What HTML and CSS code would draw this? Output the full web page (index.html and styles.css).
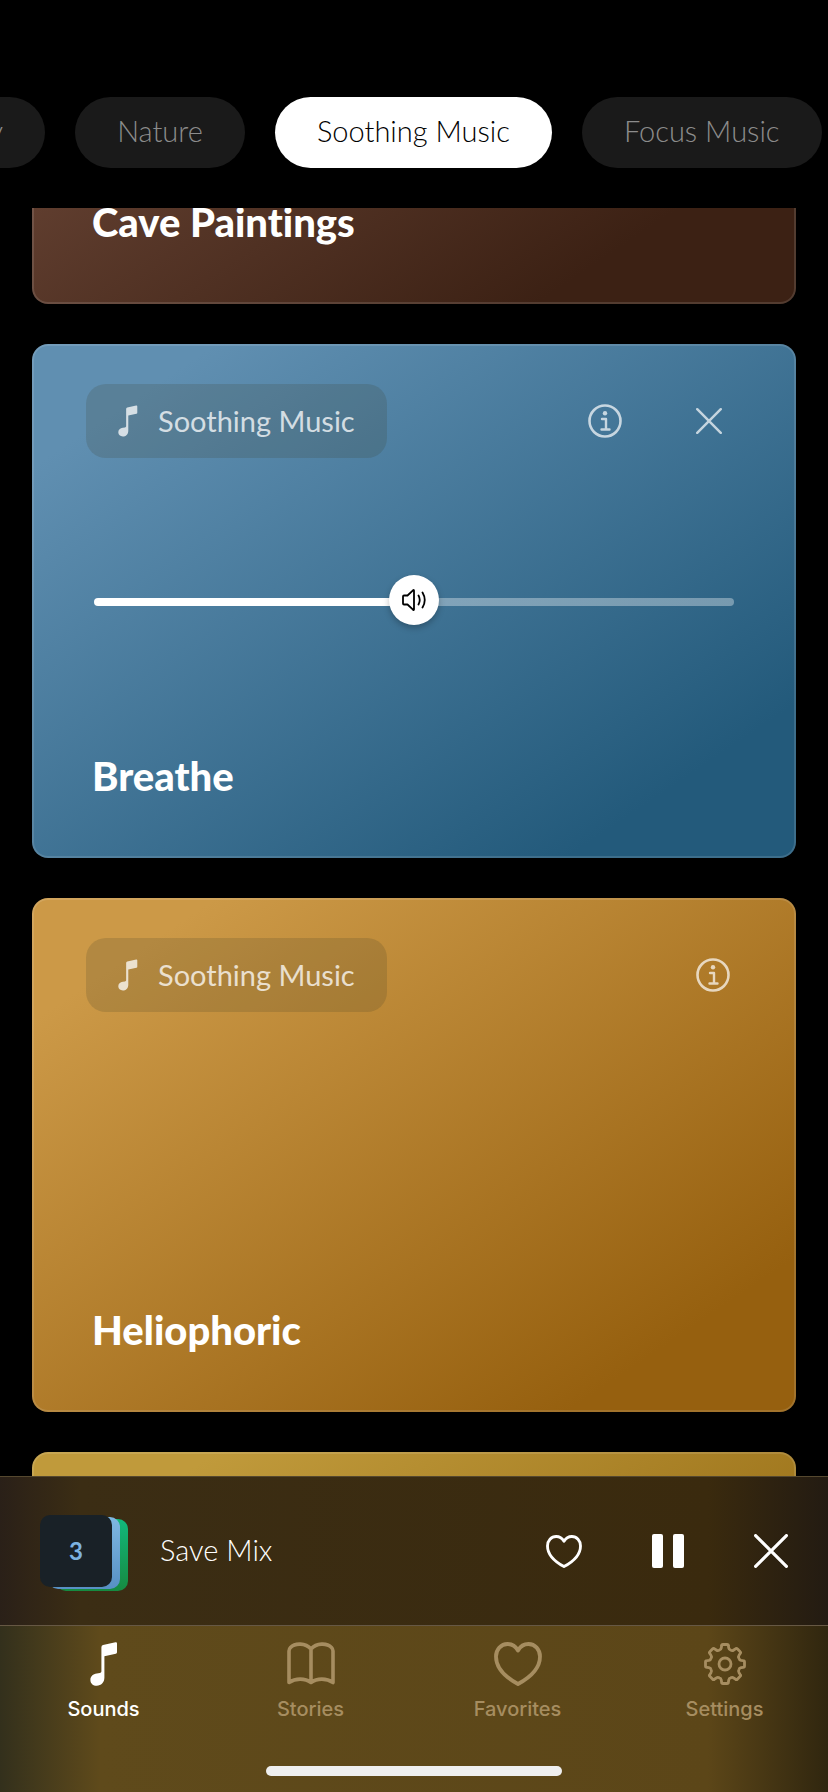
FILE: index.html
```
<!DOCTYPE html>
<html lang="en">
<head>
  <meta charset="UTF-8" />
  <meta name="viewport" content="width=device-width, initial-scale=1.0"/>
  <title>Sounds</title>
  <link rel="stylesheet" href="styles.css">
</head>
<body>

  <!-- shared icons -->
  <svg class="icon-defs" aria-hidden="true">
    <symbol id="icon-note" viewBox="0 0 28 44">
      <path d="M11.4 5.2 Q11.4 3.4 13 3 L25.500 .3 Q27 0 27 1.600 V10.300 Q27 11.400 25.800 11.700 L14.400 14.200 V35.500 C14.400 40.500 11 43.700 6.800 43.700 C3 43.700 .4 41.400 .4 37.900 C.4 34.300 3 32 6.800 31.500 L9.800 31 Q11.400 30.700 11.400 29.400 Z" fill="currentColor"/>
    </symbol>
    <symbol id="icon-info" viewBox="0 0 34 34">
      <circle cx="17" cy="17" r="15.500" fill="none" stroke="currentColor" stroke-width="2.600"/>
      <circle cx="17" cy="9.300" r="2.200" fill="currentColor"/>
      <path d="M14 15 H18 V25.500 M13.500 25.500 H21.500" fill="none" stroke="currentColor" stroke-width="2.400" stroke-linecap="round" stroke-linejoin="round"/>
    </symbol>
    <symbol id="icon-close" viewBox="0 0 34 34">
      <path d="M1.600 1.600 L32.400 32.400 M32.400 1.600 L1.600 32.400" fill="none" stroke="currentColor" stroke-width="3.200" stroke-linecap="round"/>
    </symbol>
    <symbol id="icon-heart" viewBox="0 0 48 44">
      <path d="M24 8.500 C21.500 4 18 2 13.500 2 C7 2 2 7.500 2 14.500 C2 26 11 35 24 42 C37 35 46 26 46 14.500 C46 7.500 41 2 34.500 2 C30 2 26.500 4 24 8.500 Z" fill="none" stroke="currentColor" stroke-width="3.800" stroke-linejoin="round"/>
    </symbol>
  </svg>

  <nav class="categories" aria-label="Categories">
    <button class="category category-cut">City</button>
    <button class="category">Nature</button>
    <button class="category active">Soothing Music</button>
    <button class="category">Focus Music</button>
  </nav>

  <main class="sounds">
    <div class="sound-list">
      <article class="card brown">
        <h2>Cave Paintings</h2>
      </article>

      <article class="card blue">
        <div class="card-top">
          <span class="tag"><svg class="tag-icon"><use href="#icon-note"/></svg>Soothing Music</span>
          <div class="card-actions">
            <button class="icon-btn" aria-label="Info"><svg class="info"><use href="#icon-info"/></svg></button>
            <button class="icon-btn" aria-label="Remove"><svg class="close"><use href="#icon-close"/></svg></button>
          </div>
        </div>
        <div class="volume">
          <input type="range" min="0" max="100" value="50" aria-label="Volume">
          <svg class="volume-icon" viewBox="0 0 26 24" aria-hidden="true">
            <path d="M2 8.500 Q2 7.500 3 7.500 H6.500 L12 2.300 Q13 1.500 13 2.800 V21.200 Q13 22.500 12 21.700 L6.500 16.500 H3 Q2 16.500 2 15.500 Z M17.500 7.500 Q20 12 17.500 16.500 M21.500 4.500 Q26 12 21.500 19.500" fill="none" stroke="#000" stroke-width="1.800" stroke-linecap="round" stroke-linejoin="round"/>
          </svg>
        </div>
        <h2>Breathe</h2>
      </article>

      <article class="card gold">
        <div class="card-top">
          <span class="tag"><svg class="tag-icon"><use href="#icon-note"/></svg>Soothing Music</span>
          <div class="card-actions">
            <button class="icon-btn" aria-label="Info"><svg class="info"><use href="#icon-info"/></svg></button>
          </div>
        </div>
        <h2>Heliophoric</h2>
      </article>

      <article class="card yellow"></article>
    </div>
  </main>

  <footer>
    <section class="player">
      <div class="mix">
        <span class="mix-layer green"></span>
        <span class="mix-layer sky"></span>
        <span class="mix-layer count">3</span>
      </div>
      <button class="save">Save Mix</button>
      <div class="player-actions">
        <button class="icon-btn" aria-label="Favorite"><svg class="heart"><use href="#icon-heart"/></svg></button>
        <button class="icon-btn" aria-label="Pause">
          <svg class="pause" viewBox="0 0 32 34"><rect width="11" height="34" rx="2" fill="#fff"/><rect x="21" width="11" height="34" rx="2" fill="#fff"/></svg>
        </button>
        <button class="icon-btn" aria-label="Close"><svg class="stop"><use href="#icon-close"/></svg></button>
      </div>
    </section>

    <nav class="tabs" aria-label="Main">
      <a class="tab active" href="#"><svg class="tab-note"><use href="#icon-note"/></svg>Sounds</a>
      <a class="tab" href="#">
        <svg class="tab-icon" viewBox="0 0 48 44">
          <path d="M24 7 C18.500 .8 8 .8 3.500 5.500 Q2 7 2 9 V40.500 C8.500 36 18 36 24 40.500 C30 36 39.500 36 46 40.500 V9 Q46 7 44.500 5.500 C40 .8 29.500 .8 24 7 Z M24 7 V40.500" fill="none" stroke="currentColor" stroke-width="3.600" stroke-linejoin="round"/>
        </svg>Stories</a>
      <a class="tab" href="#"><svg class="tab-icon"><use href="#icon-heart"/></svg>Favorites</a>
      <a class="tab" href="#">
        <svg class="tab-icon" viewBox="-24 -22 48 44">
          <g fill="none" stroke="currentColor" stroke-width="2.800" stroke-linejoin="round">
            <path id="gear" d=""/>
            <circle r="6"/>
          </g>
        </svg>Settings</a>
    </nav>
    <div class="home-bar"></div>
  </footer>

  <script>
    // gear outline: 8 teeth around the centre
    const point = (r, deg) => {
      const a = deg * Math.PI / 180;
      return (r * Math.sin(a)).toFixed(1) + " " + (-r * Math.cos(a)).toFixed(1);
    };
    let d = "";
    for (let i = 0; i < 8; i++) {
      const a = i * 45;
      d += (i ? "L" : "M") + point(18.5, a - 10.5) + "Q" + point(19.8, a - 10) + " " + point(19.6, a - 6);
      d += "L" + point(19.6, a + 6) + "Q" + point(19.8, a + 10) + " " + point(18.5, a + 10.5);
      d += "L" + point(16.5, a + 13) + "Q" + point(14.8, a + 16) + " " + point(15, a + 22.5);
      d += "Q" + point(14.8, a + 29) + " " + point(16.5, a + 32);
    }
    document.getElementById("gear").setAttribute("d", d + "Z");
  </script>

</body>
</html>
```
FILE: styles.css
```
* {
  box-sizing: border-box;
}

body {
  margin: 0;
  height: 100vh;
  display: flex;
  flex-direction: column;
  overflow: hidden;
  background: #000;
  color: #fff;
  font-family: Lato, "Open Sans", sans-serif;
  font-variant-ligatures: none;
}

button {
  font: inherit;
  color: inherit;
  background: none;
  border: none;
  padding: 0;
  cursor: pointer;
}

svg {
  display: block;
}

.icon-defs {
  display: none;
}

/* categories */
.categories {
  flex: none;
  display: flex;
  gap: 30px;
  padding: 97px 0 40px;
  overflow: hidden;
}

.category {
  flex: none;
  height: 71px;
  min-width: 170px;
  padding: 0 42px 4px;
  border-radius: 36px;
  background: #1a1a1a;
  color: #8c8c8c;
  font-size: 29px;
  font-weight: 300;
}

.category-cut {
  margin-left: -125px;
  text-align: right;
}

.category.active {
  background: #fff;
  color: #000;
}

/* sound cards */
.sounds {
  flex: 1;
  min-height: 0;
  overflow: hidden;
}

.sound-list {
  display: flex;
  flex-direction: column;
  gap: 40px;
  padding: 0 32px;
  margin-top: -418px;
}

.card {
  flex: none;
  height: 514px;
  display: flex;
  flex-direction: column;
  justify-content: space-between;
  padding: 38px 64px 56px 52px;
  border: 2px solid rgba(255, 255, 255, 0.12);
  border-radius: 16px;
  background-origin: border-box;
}

.card h2 {
  margin: auto 0 0 6px;
  font-size: 40px;
  line-height: 48px;
  font-weight: 900;
}

.card.brown {
  background-image: linear-gradient(to bottom right, #775040 12%, #3c2114 83%);
}

.card.blue {
  background-image: linear-gradient(to bottom right, #608fb1 12%, #235a7b 85%);
}

.card.gold {
  background-image: linear-gradient(to bottom right, #cc9947 12%, #96600f 85%);
}

.card.yellow {
  background-image: linear-gradient(to bottom right, #c09a3b 12%, #8a5f0a 85%);
}

.card-top {
  display: flex;
  justify-content: space-between;
  align-items: center;
}

.tag {
  display: flex;
  align-items: center;
  gap: 20px;
  height: 74px;
  padding: 0 32px;
  border-radius: 20px;
  background: rgba(60, 60, 40, 0.18);
  color: rgba(255, 255, 255, 0.75);
  font-size: 29px;
  line-height: 32px;
}

.tag-icon {
  width: 20px;
  height: 32px;
}

.card-actions {
  display: flex;
  gap: 74px;
  color: rgba(255, 255, 255, 0.7);
}

.card-actions .icon-btn {
  display: flex;
  align-items: center;
  width: 34px;
  height: 34px;
}

.info {
  width: 34px;
  height: 34px;
}

.close {
  width: 26px;
  height: 26px;
}

/* volume slider */
.volume {
  position: relative;
  height: 50px;
  margin: 117px -4px 0 8px;
}

.volume input {
  -webkit-appearance: none;
  appearance: none;
  display: block;
  width: 100%;
  height: 54px;
  margin: 0;
  background: none;
}

.volume input::-webkit-slider-runnable-track {
  height: 8px;
  border-radius: 4px;
  background: linear-gradient(to right, #fff 50%, rgba(255, 255, 255, 0.35) 50%);
}

.volume input::-webkit-slider-thumb {
  -webkit-appearance: none;
  width: 50px;
  height: 50px;
  margin-top: -23px;
  border-radius: 50%;
  background: #fff;
  box-shadow: 0 3px 6px rgba(0, 0, 0, 0.25);
}

.volume-icon {
  position: absolute;
  left: 50%;
  top: 50%;
  width: 26px;
  height: 24px;
  transform: translate(-50%, -50%);
  pointer-events: none;
}

/* player */
.player {
  display: flex;
  align-items: center;
  height: 149px;
  padding: 0 40px;
  border-top: 1px solid #55482f;
  background: linear-gradient(to right, #2a2018, #3b2d14 80px, #3a2a0e calc(100% - 120px), #231b12);
}

.mix {
  position: relative;
  width: 88px;
  height: 72px;
}

.mix-layer {
  position: absolute;
  width: 72px;
  height: 72px;
  border-radius: 10px;
}

.mix-layer.green {
  left: 16px;
  top: 4px;
  background: linear-gradient(#12b87c, #168a41);
}

.mix-layer.sky {
  left: 8px;
  top: 2px;
  background: linear-gradient(#7fb8e2, #5790c4);
}

.mix-layer.count {
  left: 0;
  top: 0;
  background: #192127;
  color: #7cb1e0;
  font-size: 24px;
  line-height: 72px;
  font-weight: 700;
  text-align: center;
}

.save {
  margin-left: 32px;
  padding-bottom: 4px;
  font-size: 29px;
  font-weight: 300;
}

.player-actions {
  display: flex;
  align-items: center;
  gap: 70px;
  margin-left: auto;
}

.heart {
  width: 36px;
  height: 33px;
}

.pause {
  width: 32px;
  height: 34px;
}

.stop {
  width: 34px;
  height: 34px;
}

/* tab bar */
footer {
  flex: none;
  background: linear-gradient(to right, #33301c, #5f4a1b 100px, #5c4618 calc(100% - 120px), #30260f);
}

.tabs {
  display: grid;
  grid-template-columns: repeat(4, 1fr);
  height: 141px;
  padding-top: 16px;
  border-top: 1px solid #665844;
}

.tab {
  display: flex;
  flex-direction: column;
  align-items: center;
  gap: 11px;
  color: #a68d60;
  font-family: Inter, sans-serif;
  font-size: 20px;
  line-height: 24px;
  font-weight: 500;
  text-decoration: none;
}

.tab.active {
  color: #fff;
}

.tab-icon {
  width: 48px;
  height: 44px;
}

.tab-note {
  width: 28px;
  height: 44px;
}

.home-bar {
  width: 296px;
  height: 10px;
  margin: 0 auto 16px;
  border-radius: 5px;
  background: #efefef;
}
```
